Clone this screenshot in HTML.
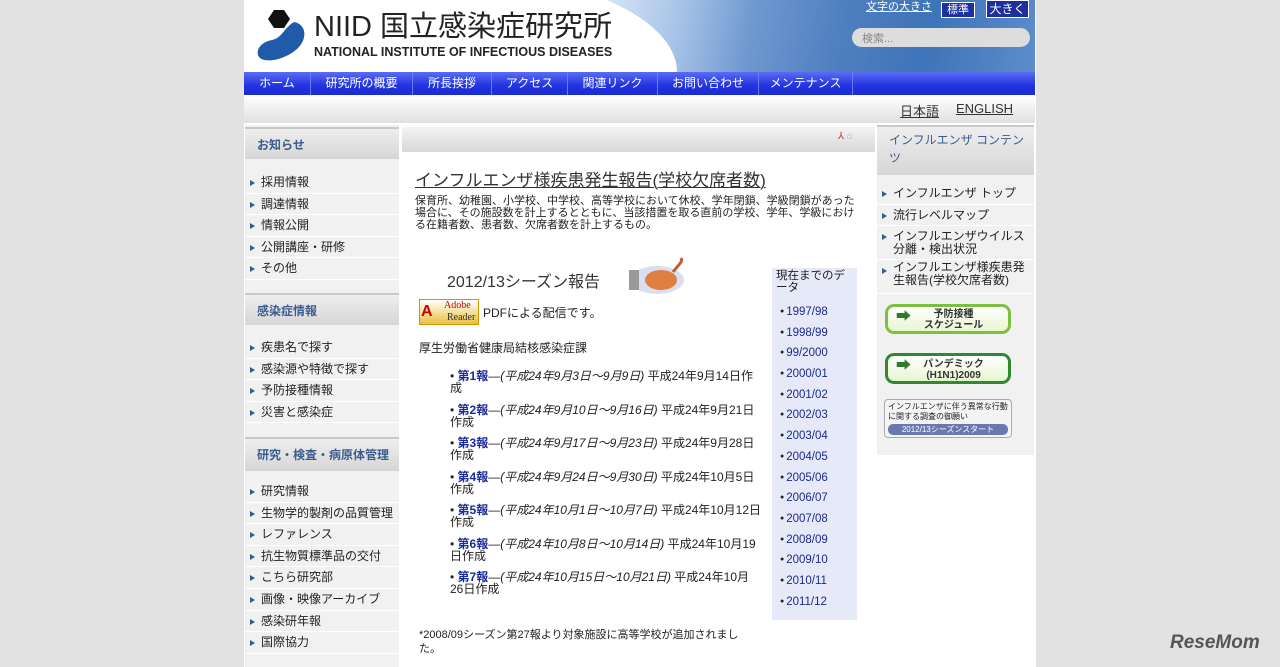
<!DOCTYPE html>
<html><head><meta charset="utf-8">
<style>
*{margin:0;padding:0;box-sizing:border-box}
body{width:1280px;height:667px;overflow:hidden;background:#e2e2e2;font-family:"Liberation Sans","Noto Sans CJK JP",sans-serif;color:#222;position:relative}
.a{position:absolute}
.wrap{left:244px;top:0;width:792px;height:667px;background:#fff}
.nav{left:244px;top:72px;width:791px;height:23px;background:linear-gradient(#5a6cf5,#2233e0 60%,#1a2bd0);display:flex}
.nav div{color:#fff;font-size:12px;line-height:23px;text-align:center;border-right:1px solid #6b7af0}
.band{left:244px;top:95px;width:791px;height:28px;background:linear-gradient(#fff,#e0e0e0)}
.col{background:#f1f1f1}
.sh{position:absolute;left:0;width:154px;height:32px;background:linear-gradient(#eee,#d6d6d6);border-top:2px solid #c8c8c8;font-size:12px;color:#3b5b8e;padding:7px 0 0 12px;font-weight:bold}
.grp{position:absolute;left:0;width:154px}
.li{font-size:12px;height:21.6px;line-height:21.6px;padding-left:16px;position:relative;border-bottom:1px solid #fff}
.li:before{content:"";position:absolute;left:5px;top:8px;border-left:5px solid #3a5a8a;border-top:3px solid transparent;border-bottom:3px solid transparent}
.c12{font-size:11px;line-height:12px}
a{color:#1a2b8c}
.rep{font-size:12px;line-height:12px}
.rep b a{color:#1a2b9c}
.yr{font-size:11.5px;height:20.7px;line-height:20.7px}
.yr:before{content:"● ";font-size:7px;vertical-align:2px}
.btn{border:3px solid #3a9a3a;border-radius:9px;background:linear-gradient(#fff,#e8f6d0);font-size:10px;font-weight:bold;color:#333;text-align:center;line-height:11px}
</style></head><body>
<div class="a wrap"></div>
<!-- header -->
<div class="a" style="left:244px;top:0;width:791px;height:72px;overflow:hidden">
<div class="a" style="left:356px;top:0;width:435px;height:72px;background:linear-gradient(100deg,#dbe7f5 0%,#a8c4e8 18%,#6f98d0 35%,#4f7fc0 55%,#3e74b8 75%,#5d8ccb 100%)"></div>
<div class="a" style="left:-61px;top:-31px;width:494px;height:206px;border-radius:50%;background:#fff"></div>
</div>
<svg class="a" style="left:254px;top:10px" width="56" height="54"><polygon points="20,0 30,0 36,9 30,18 20,18 14,9" fill="#111"/><path d="M40,12 C52,14 54,28 44,38 C34,48 14,54 6,48 C0,42 6,32 18,30 C28,28 30,18 40,12Z" fill="#1f5ba8"/></svg>
<div class="a" style="left:314px;top:10px;font-size:29px;line-height:34px;color:#222;letter-spacing:0">NIID 国立感染症研究所</div>
<div class="a" style="left:314px;top:45px;font-size:12.5px;font-weight:bold;color:#222">NATIONAL INSTITUTE OF INFECTIOUS DISEASES</div>
<div class="a" style="left:866px;top:-2px;font-size:11px;color:#fff;text-decoration:underline">文字の大きさ</div>
<div class="a" style="left:941px;top:2px;width:34px;height:16px;background:#1e2f9e;border:1px solid #fff;color:#fff;font-size:11px;text-align:center;line-height:14px">標準</div>
<div class="a" style="left:986px;top:0px;width:43px;height:18px;background:#1e2f9e;border:1px solid #fff;color:#fff;font-size:12px;text-align:center;line-height:16px">大きく</div>
<div class="a" style="left:852px;top:28px;width:178px;height:19px;border-radius:10px;background:#ddd;font-size:11px;color:#888;padding:2px 10px">検索...</div>
<div class="a nav"><div style="width:67px">ホーム</div><div style="width:102px">研究所の概要</div><div style="width:79px">所長挨拶</div><div style="width:76px">アクセス</div><div style="width:90px">関連リンク</div><div style="width:101px">お問い合わせ</div><div style="width:94px">メンテナンス</div></div>
<div class="a band"></div>
<div class="a" style="left:900px;top:101px;font-size:13px;color:#333;text-decoration:underline">日本語</div>
<div class="a" style="left:956px;top:101px;font-size:13px;color:#333;text-decoration:underline">ENGLISH</div>
<!-- left -->
<div class="a col" style="left:245px;top:125px;width:154px;height:542px">
<div class="sh" style="top:2px">お知らせ</div>
<div class="grp" style="top:47px"><div class="li">採用情報</div><div class="li">調達情報</div><div class="li">情報公開</div><div class="li">公開講座・研修</div><div class="li">その他</div></div>
<div class="sh" style="top:168px">感染症情報</div>
<div class="grp" style="top:212px"><div class="li">疾患名で探す</div><div class="li">感染源や特徴で探す</div><div class="li">予防接種情報</div><div class="li">災害と感染症</div></div>
<div class="sh" style="top:312px;height:34px">研究・検査・病原体管理</div>
<div class="grp" style="top:356px"><div class="li">研究情報</div><div class="li">生物学的製剤の品質管理</div><div class="li">レファレンス</div><div class="li">抗生物質標準品の交付</div><div class="li">こちら研究部</div><div class="li">画像・映像アーカイブ</div><div class="li">感染研年報</div><div class="li">国際協力</div></div>
</div>
<!-- center -->
<div class="a" style="left:402px;top:127px;width:473px;height:25px;background:linear-gradient(#f4f4f4,#d8d8d8)"></div>
<div class="a" style="left:838px;top:131px;font-size:10px;color:#c33">⅄ <span style="color:#aaa">⌂</span></div>
<div class="a" style="left:415px;top:166px;font-size:17px;color:#333;text-decoration:underline;text-decoration-thickness:1px">インフルエンザ様疾患発生報告(学校欠席者数)</div>
<div class="a c12" style="left:415px;top:195px;width:450px">保育所、幼稚園、小学校、中学校、高等学校において休校、学年閉鎖、学級閉鎖があった場合に、その施設数を計上するとともに、当該措置を取る直前の学校、学年、学級における在籍者数、患者数、欠席者数を計上するもの。</div>
<div class="a" style="left:447px;top:268px;font-size:16px;color:#333">2012/13シーズン報告</div>
<svg class="a" style="left:625px;top:256px" width="60" height="40"><ellipse cx="32" cy="24" rx="27" ry="14" fill="#d8dff0"/><rect x="4" y="14" width="10" height="20" fill="#999"/><ellipse cx="36" cy="24" rx="16" ry="10" fill="#e08040"/><path d="M48,16 C54,8 58,6 56,2" stroke="#c06030" stroke-width="3" fill="none"/></svg>
<div class="a" style="left:419px;top:299px;width:60px;height:26px;background:linear-gradient(#fff,#e8c040);border:1px solid #c90"><span style="color:#c00;font-weight:bold;font-size:16px;position:absolute;left:1px;top:3px">A</span><span style="position:absolute;left:24px;top:0;font-size:10px;color:#c00;font-family:'Liberation Serif',serif">Adobe</span><span style="position:absolute;left:27px;top:12px;font-size:10px;color:#333;font-family:'Liberation Serif',serif">Reader</span></div>
<div class="a" style="left:483px;top:304px;font-size:12px">PDFによる配信です。</div>
<div class="a" style="left:419px;top:339px;font-size:12px">厚生労働省健康局結核感染症課</div>
<div class="a rep" style="left:450px;top:370px;width:312px">
<div style="height:33.5px">• <b><a>第1報</a></b>—<i>(平成24年9月3日～9月9日)</i> 平成24年9月14日作成</div>
<div style="height:33.5px">• <b><a>第2報</a></b>—<i>(平成24年9月10日～9月16日)</i> 平成24年9月21日作成</div>
<div style="height:33.5px">• <b><a>第3報</a></b>—<i>(平成24年9月17日～9月23日)</i> 平成24年9月28日作成</div>
<div style="height:33.5px">• <b><a>第4報</a></b>—<i>(平成24年9月24日～9月30日)</i> 平成24年10月5日作成</div>
<div style="height:33.5px">• <b><a>第5報</a></b>—<i>(平成24年10月1日～10月7日)</i> 平成24年10月12日作成</div>
<div style="height:33.5px">• <b><a>第6報</a></b>—<i>(平成24年10月8日～10月14日)</i> 平成24年10月19日作成</div>
<div style="height:33.5px">• <b><a>第7報</a></b>—<i>(平成24年10月15日～10月21日)</i> 平成24年10月26日作成</div>
</div>
<div class="a c12" style="left:419px;top:628px;width:340px;font-size:11px;line-height:14px">*2008/09シーズン第27報より対象施設に高等学校が追加されました。</div>
<div class="a" style="left:772px;top:268px;width:85px;height:352px;background:#e6e9f8;padding:2px 4px">
<div style="font-size:11.5px;line-height:12px;margin-bottom:8px">現在までのデータ</div>
<div style="padding-left:4px">
<div class="yr"><a>1997/98</a></div><div class="yr"><a>1998/99</a></div><div class="yr"><a>99/2000</a></div><div class="yr"><a>2000/01</a></div><div class="yr"><a>2001/02</a></div><div class="yr"><a>2002/03</a></div><div class="yr"><a>2003/04</a></div><div class="yr"><a>2004/05</a></div><div class="yr"><a>2005/06</a></div><div class="yr"><a>2006/07</a></div><div class="yr"><a>2007/08</a></div><div class="yr"><a>2008/09</a></div><div class="yr"><a>2009/10</a></div><div class="yr"><a>2010/11</a></div><div class="yr"><a>2011/12</a></div>
</div></div>
<!-- right -->
<div class="a col" style="left:877px;top:125px;width:157px;height:330px">
<div class="sh" style="position:relative;width:157px;height:50px;font-weight:normal;color:#3b5b8e;line-height:18px;padding-top:4px">インフルエンザ コンテンツ</div>
<div style="height:8px"></div>
<div class="li">インフルエンザ トップ</div><div class="li">流行レベルマップ</div>
<div class="li" style="height:34px;line-height:12.5px;padding-top:4px">インフルエンザウイルス分離・検出状況</div>
<div class="li" style="height:34px;line-height:12.5px;padding-top:1px">インフルエンザ様疾患発生報告(学校欠席者数)</div>
</div>
<div class="a btn" style="left:885px;top:304px;width:126px;height:30px;border-color:#7cc040;padding-top:2px"><span style="position:absolute;left:8px;top:4px;color:#2d7a2d;font-size:15px">➡</span>&nbsp;&nbsp;&nbsp;&nbsp;予防接種<br>&nbsp;&nbsp;&nbsp;&nbsp;スケジュール</div>
<div class="a btn" style="left:885px;top:353px;width:126px;height:31px;border-color:#2e8a2e;padding-top:3px"><span style="position:absolute;left:8px;top:4px;color:#2d7a2d;font-size:15px">➡</span>&nbsp;&nbsp;&nbsp;&nbsp;パンデミック<br>&nbsp;&nbsp;&nbsp;&nbsp;(H1N1)2009</div>
<div class="a" style="left:884px;top:399px;width:128px;height:39px;border:1px solid #aaa;border-radius:4px;background:#f4f4f4;font-size:8px;line-height:10px;padding:2px 3px">インフルエンザに伴う異常な行動<br>に関する調査の御願い<div style="background:#6a78b0;color:#fff;border-radius:5px;text-align:center;margin-top:2px;line-height:11px">2012/13シーズンスタート</div></div>
<div class="a" style="left:1170px;top:632px;font-size:19px;font-weight:bold;color:#555;font-style:italic">ReseMom</div>
</body></html>
